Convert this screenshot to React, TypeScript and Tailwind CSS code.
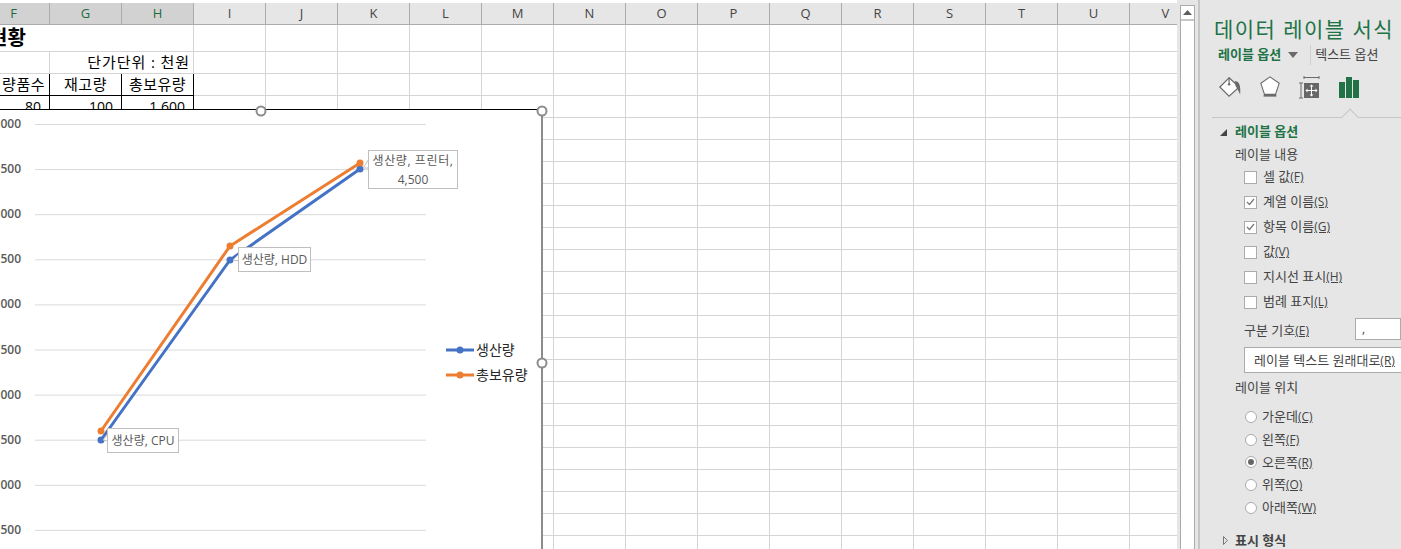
const cols = ['F', 'G', 'H', 'I', 'J', 'K', 'L', 'M', 'N', 'O', 'P', 'Q', 'R', 'S', 'T', 'U', 'V'];
const selected = ['F', 'G', 'H'];

const checks = [
  { label: '셀 값', key: '(F)', on: false },
  { label: '계열 이름', key: '(S)', on: true },
  { label: '항목 이름', key: '(G)', on: true },
  { label: '값', key: '(V)', on: false },
  { label: '지시선 표시', key: '(H)', on: false },
  { label: '범례 표지', key: '(L)', on: false },
];

const radios = [
  { label: '가운데', key: '(C)', on: false },
  { label: '왼쪽', key: '(F)', on: false },
  { label: '오른쪽', key: '(R)', on: true },
  { label: '위쪽', key: '(O)', on: false },
  { label: '아래쪽', key: '(W)', on: false },
];

const axis = ['000', '500', '000', '500', '000', '500', '000', '500', '000', '500'];

function Cell() {
  return <div className="w-[72px] shrink-0 border-r border-b border-[#d4d4d4]" />;
}

function Sheet() {
  return (
    <div className="-ml-[22px] text-[15px] tracking-[0.5px] text-black">
      <div className="flex h-[25px] bg-white pt-[3px]">
        {cols.map((c) => (
          <div
            key={c}
            className={`flex w-[72px] shrink-0 items-center justify-center border-r border-b border-[#ababab] text-[13px] tracking-normal ${
              selected.includes(c) ? 'bg-[#d2d2d2] text-[#1e6b41]' : 'bg-[#e6e6e6] text-[#444]'
            }`}
          >
            {c}
          </div>
        ))}
      </div>
      {/* title row */}
      <div className="flex h-[27px]">
        <div className="w-[216px] shrink-0 border-r border-b border-[#d4d4d4] pl-[11px] text-[20px] leading-[25px] font-bold tracking-normal">
          현황
        </div>
        {cols.slice(3).map((c) => <Cell key={c} />)}
      </div>
      <div className="flex h-[22px]">
        <Cell />
        <div className="w-[144px] shrink-0 border-r border-b border-[#d4d4d4] pr-[3px] text-right leading-[21px] tracking-[0.9px]">
          단가단위 : 천원
        </div>
        {cols.slice(3).map((c) => <Cell key={c} />)}
      </div>
      <div className="flex h-[22px]">
        {['량품수', '재고량', '총보유량'].map((t, i) => (
          <div
            key={t}
            className={`w-[72px] shrink-0 border-r border-b border-black text-center leading-[21px] whitespace-nowrap ${i === 0 ? 'flex justify-end pr-[4px]' : ''}`}
          >
            {t}
          </div>
        ))}
        {cols.slice(3).map((c) => <Cell key={c} />)}
      </div>
      <div className="flex h-[22px]">
        {['80', '100', '1,600'].map((t) => (
          <div key={t} className="w-[72px] shrink-0 border-r border-b border-black pr-[8px] text-right text-[14px] leading-[21px] tracking-normal">
            {t}
          </div>
        ))}
        {cols.slice(3).map((c) => <Cell key={c} />)}
      </div>
      {Array.from({ length: 20 }, (_, r) => (
        <div key={r} className="flex h-[22px]">
          {cols.map((c) => <Cell key={c} />)}
        </div>
      ))}
    </div>
  );
}

function Chart() {
  return (
    <div className="absolute top-[109px] left-0 h-[440px] w-[543px] border-t border-r-2 border-t-black border-r-[#8c8c8c] bg-white">
      <svg className="absolute top-[-109px] left-0" width="560" height="549">
        {axis.map((_, i) => {
          const y = 123.5 + i * 45.1;
          return <line key={i} x1="35" x2="426" y1={y} y2={y} stroke="#d9d9d9" />;
        })}
        <polyline points="101,439 230,259 360,168" fill="none" stroke="#4472c4" strokeWidth="3" />
        <polyline points="101,430 230,245 360,162" fill="none" stroke="#ed7d31" strokeWidth="3" />
        <circle cx="101" cy="439" r="3.5" fill="#4472c4" />
        <circle cx="230" cy="259" r="3.5" fill="#4472c4" />
        <circle cx="360" cy="168" r="3.5" fill="#4472c4" />
        <circle cx="101" cy="430" r="3.5" fill="#ed7d31" />
        <circle cx="230" cy="245" r="3.5" fill="#ed7d31" />
        <circle cx="360" cy="162" r="3.5" fill="#ed7d31" />
        <polygon points="108,433 103,439 108,440" fill="#fff" stroke="#bfbfbf" />
        <polygon points="239,253 233,259 239,260" fill="#fff" stroke="#bfbfbf" />
        <polygon points="369,158 363,167 369,167" fill="#fff" stroke="#bfbfbf" />
        <line x1="446" x2="474" y1="349" y2="349" stroke="#4472c4" strokeWidth="3" />
        <circle cx="460" cy="349" r="3.5" fill="#4472c4" />
        <line x1="446" x2="474" y1="374" y2="374" stroke="#ed7d31" strokeWidth="3" />
        <circle cx="460" cy="374" r="3.5" fill="#ed7d31" />
        <circle cx="261" cy="110" r="4.5" fill="#fff" stroke="#8c8c8c" strokeWidth="2" />
        <circle cx="542" cy="110" r="4.5" fill="#fff" stroke="#8c8c8c" strokeWidth="2" />
        <circle cx="542" cy="362" r="4.5" fill="#fff" stroke="#8c8c8c" strokeWidth="2" />
      </svg>

      {axis.map((t, i) => (
        <div
          key={i}
          className="absolute left-0 w-[21px] text-right text-[12px] leading-[14px] font-semibold text-[#595959]"
          style={{ top: 7 + i * 45.1 }}
        >
          {t}
        </div>
      ))}

      <div className="absolute top-[318px] left-[107px] flex h-[25px] w-[72px] items-center justify-center border border-[#bfbfbf] bg-white text-[12px] whitespace-nowrap text-[#595959]">
        생산량, CPU
      </div>
      <div className="absolute top-[137px] left-[238px] flex h-[25px] w-[73px] items-center justify-center border border-[#bfbfbf] bg-white text-[12px] whitespace-nowrap text-[#595959]">
        생산량, HDD
      </div>
      <div className="absolute top-[40px] left-[368px] flex h-[39px] w-[90px] flex-col items-center justify-center border border-[#bfbfbf] bg-white text-[12px] leading-[19px] whitespace-nowrap text-[#595959]">
        <span className="tracking-[0.6px]">생산량, 프린터,</span>
        <span>4,500</span>
      </div>

      <div className="absolute top-[230px] left-[476px] text-[14px] leading-[20px] text-[#262626]">생산량</div>
      <div className="absolute top-[255px] left-[476px] text-[14px] leading-[20px] text-[#262626]">총보유량</div>
    </div>
  );
}

function Scrollbar() {
  return (
    <div className="flex h-full w-[21px] shrink-0 flex-col bg-[#e6e6e6] pt-[5px] pr-[3px] pl-[3px]">
      <div className="flex h-full flex-col border-x border-t border-[#ababab] bg-white">
        <div className="flex h-[15px] items-center justify-center border-b-2 border-[#c6c6c6]">
          <svg width="9" height="5"><polygon points="4.5,0 9,5 0,5" fill="#5f5f5f" /></svg>
        </div>
      </div>
    </div>
  );
}

function Label({ text, k }: { text: string; k: string }) {
  return (
    <span className="text-[13px] whitespace-nowrap text-[#444]">
      {text}
      <span className="text-[12px] underline">{k}</span>
    </span>
  );
}

function PaintIcon() {
  return (
    <svg width="24" height="24" viewBox="0 0 26 26">
      <path d="M12 3 L23 13 L12 23 L2 13 Z" fill="#fff" stroke="#6a6a6a" strokeWidth="1.3" />
      <path d="M12 3 V9" stroke="#6a6a6a" strokeWidth="1.3" />
      <circle cx="12" cy="10" r="1.3" fill="#6a6a6a" />
      <path d="M18 7 C22 6 25 10 24 21 C22 18 21 14 19 12 Z" fill="#6a6a6a" />
    </svg>
  );
}

function PentagonIcon() {
  return (
    <svg width="22" height="24" viewBox="0 0 24 26">
      <path d="M12 2 L22 9 L18 21 H6 L2 9 Z" fill="#fff" stroke="#6a6a6a" strokeWidth="1.2" />
      <path d="M5 22.5 H19" stroke="#6a6a6a" strokeWidth="2" />
    </svg>
  );
}

function SizeIcon() {
  return (
    <svg width="22" height="24" viewBox="0 0 22 24">
      <path d="M6 2.5 H21 M6 1 V4 M21 1 V4 M1 8 H5 M3 8 V23 M1 23 H5" stroke="#6a6a6a" fill="none" />
      <rect x="6" y="8" width="15" height="15" fill="#666" />
      <path d="M13.5 11 V20 M9 15.5 H18" stroke="#fff" />
      <path d="M13.5 9.5 l-2 2 h4 Z M13.5 21.5 l-2 -2 h4 Z M7.5 15.5 l2 -2 v4 Z M19.5 15.5 l-2 -2 v4 Z" fill="#fff" />
    </svg>
  );
}

function BarsIcon() {
  return (
    <svg width="20" height="21" viewBox="0 0 20 21">
      <rect x="0" y="5" width="6" height="16" fill="#217346" />
      <rect x="7" y="0" width="6" height="21" fill="#217346" />
      <rect x="14" y="3" width="6" height="18" fill="#217346" />
    </svg>
  );
}

function Panel() {
  return (
    <div className="h-full min-w-0 flex-1 overflow-hidden border-l-2 border-[#c6c6c6] bg-[#e6e6e6] pt-[14px]">
      <div className="pl-[14px] text-[21px] leading-[30px] tracking-[1.45px] whitespace-nowrap text-[#217346]">
        데이터 레이블 서식
      </div>
      <div className="mt-[2px] flex h-[18px] items-center pl-[18px] text-[13px] whitespace-nowrap">
        <span className="font-bold text-[#217346]">레이블 옵션</span>
        <svg className="ml-[7px]" width="10" height="6"><polygon points="0,0 10,0 5,6" fill="#6a6a6a" /></svg>
        <span className="ml-[12px] border-l border-[#d0d0d0] pl-[4px] text-[#444]">텍스트 옵션</span>
      </div>
      <div className="mt-[9px] flex h-[28px] items-center pl-[18px]">
        <div className="flex w-[40px] justify-start"><PaintIcon /></div>
        <div className="flex w-[40px] justify-start pl-[1px]"><PentagonIcon /></div>
        <div className="flex w-[40px] justify-start"><SizeIcon /></div>
        <div className="flex w-[40px] justify-start pl-[1px]"><BarsIcon /></div>
      </div>
      <div className="relative mt-[16px] ml-[12px] h-0 border-t border-[#c6c6c6]">
        <div className="absolute top-[-7px] left-[132px] h-[12px] w-[12px] rotate-45 border-t border-l border-[#c6c6c6] bg-[#e6e6e6]" />
      </div>

      <div className="mt-[5px] flex h-[18px] items-center pl-[20px]">
        <svg width="7" height="7"><polygon points="7,0 7,7 0,7" fill="#444" /></svg>
        <span className="ml-[8px] text-[13px] font-bold whitespace-nowrap text-[#217346]">레이블 옵션</span>
      </div>
      <div className="mt-[4px] h-[18px] pl-[35px] text-[13px] leading-[18px] text-[#444]">레이블 내용</div>

      <div className="mt-[5px] flex flex-col gap-[7px] pl-[44px]">
        {checks.map((c) => (
          <div key={c.label} className="flex h-[18px] items-center gap-[6px]">
            <div className="flex h-[13px] w-[13px] items-center justify-center border border-[#ababab] bg-white">
              {c.on && (
                <svg width="9" height="8" viewBox="0 0 9 8">
                  <path d="M1 4 L3.5 6.5 L8 1" fill="none" stroke="#777" strokeWidth="1.2" />
                </svg>
              )}
            </div>
            <Label text={c.label} k={c.key} />
          </div>
        ))}
      </div>

      <div className="mt-[7px] flex h-[22px] items-center pl-[44px]">
        <div className="w-[111px]"><Label text="구분 기호" k="(E)" /></div>
        <div className="h-[22px] flex-1 border border-[#ababab] bg-white pl-[6px] text-[12px] leading-[20px] text-[#444]">,</div>
      </div>
      <div className="mt-[7px] ml-[44px] h-[26px] w-[200px] border border-[#ababab] bg-white pl-[9px] text-[13px] leading-[24px] whitespace-nowrap text-[#444]">
        레이블 텍스트 원래대로<span className="text-[12px] underline">(R)</span>
      </div>

      <div className="mt-[5px] h-[18px] pl-[35px] text-[13px] leading-[18px] text-[#444]">레이블 위치</div>

      <div className="mt-[12px] flex flex-col gap-[4.7px] pl-[45px]">
        {radios.map((r) => (
          <div key={r.label} className="flex h-[18px] items-center gap-[5px]">
            <div className="flex h-[12px] w-[12px] items-center justify-center rounded-full border border-[#ababab] bg-white">
              {r.on && <div className="h-[6px] w-[6px] rounded-full bg-[#666]" />}
            </div>
            <Label text={r.label} k={r.key} />
          </div>
        ))}
      </div>

      <div className="mt-[15px] flex h-[18px] items-center pl-[23px]">
        <svg width="5" height="9"><polygon points="0.5,0.5 4.5,4.5 0.5,8.5" fill="none" stroke="#777" /></svg>
        <span className="ml-[7px] text-[13px] font-bold whitespace-nowrap text-[#444]">표시 형식</span>
      </div>
    </div>
  );
}

export default function App() {
  return (
    <div
      className="flex h-[549px] w-[1401px] overflow-hidden bg-white"
      style={{ fontFamily: '"Open Sans", "Noto Sans CJK KR", sans-serif' }}
    >
      <div className="relative h-full w-[1177px] shrink-0 overflow-hidden">
        <Sheet />
        <Chart />
      </div>
      <Scrollbar />
      <Panel />
    </div>
  );
}
